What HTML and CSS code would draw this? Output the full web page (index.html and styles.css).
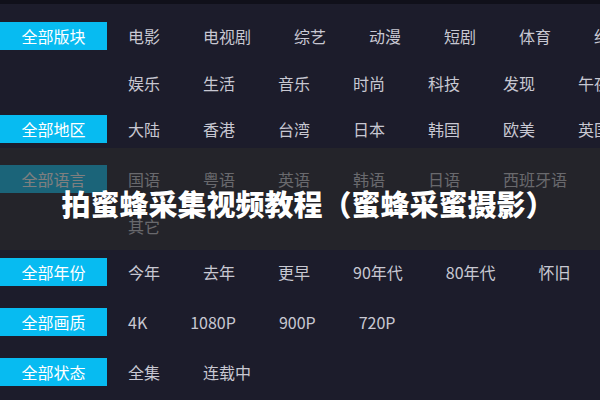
FILE: index.html
```html
<!DOCTYPE html>
<html lang="zh-CN">
<head>
    <meta charset="UTF-8">
    <meta name="viewport" content="width=device-width, initial-scale=1.0">
    <title>拍蜜蜂采集视频教程（蜜蜂采蜜摄影）</title>
    <link rel="stylesheet" href="styles.css">
</head>
<body>
    <div class="filter">
        <div class="group">
            <div class="label">全部版块</div>
            <div class="items">
                <div class="line">
                    <span>电影</span><span>电视剧</span><span>综艺</span><span>动漫</span><span>短剧</span><span>体育</span><span>纪录片</span>
                </div>
                <div class="line">
                    <span>娱乐</span><span>生活</span><span>音乐</span><span>时尚</span><span>科技</span><span>发现</span><span>午夜</span>
                </div>
            </div>
        </div>
        <div class="group">
            <div class="label">全部地区</div>
            <div class="items">
                <div class="line">
                    <span>大陆</span><span>香港</span><span>台湾</span><span>日本</span><span>韩国</span><span>欧美</span><span>英国</span>
                </div>
            </div>
        </div>
        <div class="group">
            <div class="label">全部语言</div>
            <div class="items">
                <div class="line">
                    <span>国语</span><span>粤语</span><span>英语</span><span>韩语</span><span>日语</span><span>西班牙语</span>
                </div>
                <div class="line">
                    <span>其它</span>
                </div>
            </div>
        </div>
        <div class="group">
            <div class="label">全部年份</div>
            <div class="items">
                <div class="line">
                    <span>今年</span><span>去年</span><span>更早</span><span>90年代</span><span>80年代</span><span>怀旧</span>
                </div>
            </div>
        </div>
        <div class="group">
            <div class="label">全部画质</div>
            <div class="items">
                <div class="line">
                    <span>4K</span><span>1080P</span><span>900P</span><span>720P</span>
                </div>
            </div>
        </div>
        <div class="group">
            <div class="label">全部状态</div>
            <div class="items">
                <div class="line">
                    <span>全集</span><span>连载中</span>
                </div>
            </div>
        </div>
    </div>

    <div class="cover">
        <h1>拍蜜蜂采集视频教程（蜜蜂采蜜摄影）</h1>
    </div>
</body>
</html>
```

FILE: styles.css
```css
*{margin: 0;padding: 0;}
html, body {
    height: 100%;
}
body {
    background-color: #1c1c2b;
    border-top: 4px solid #10101a;
    box-sizing: border-box;
    font-family: "Noto Sans CJK SC", "Noto Sans", sans-serif;
    font-size: 16px;
    overflow: hidden;
    position: relative;
}
.filter {
    padding-top: 9px;
}
.group {
    display: flex;
    min-height: 50px;
}
.label {
    flex: none;
    width: 107px;
    height: 28px;
    margin-top: 9px;
    line-height: 28px;
    text-align: center;
    color: #fff;
    background-color: #07bbf1;
}
.items {
    margin-left: 21px;
}
.line {
    display: flex;
    gap: 43px;
    height: 46.5px;
    line-height: 46.5px;
    white-space: nowrap;
    color: #c8c8d2;
}
.cover {
    position: absolute;
    left: 0;
    right: 0;
    top: 144px;
    height: 102px;
    padding: 7px 0 0 16px;
    box-sizing: border-box;
    display: flex;
    align-items: center;
    justify-content: center;
    background-color: rgba(42, 42, 42, 0.6);
}
.cover h1 {
    color: #fff;
    font-size: 29px;
    font-weight: 900;
    white-space: nowrap;
    text-shadow: 0 0 1px rgba(0, 0, 0, 0.4);
}
```
